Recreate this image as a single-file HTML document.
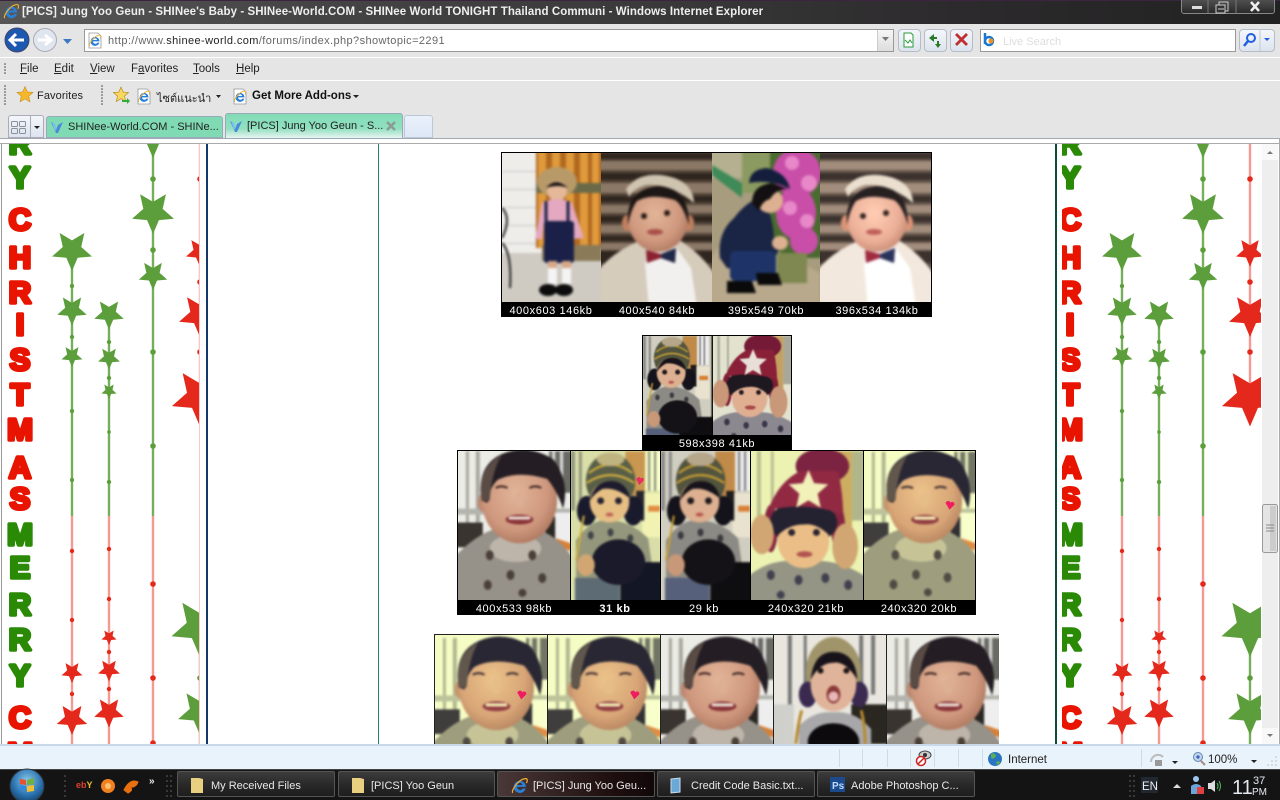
<!DOCTYPE html>
<html><head><meta charset="utf-8"><style>
html,body{margin:0;padding:0;width:1280px;height:800px;overflow:hidden;background:#fff}
body{position:relative;font-family:"Liberation Sans","Noto Sans CJK SC",sans-serif}
.a{position:absolute;white-space:nowrap}
.bar{left:0;width:1280px;background:#e5e5e5}
.m{top:63px;font-size:11.5px;color:#222}
.m u{text-decoration:underline}
.btn{top:29px;width:21px;height:21px;border:1px solid #b4bcc8;border-radius:4px;background:linear-gradient(#f4f7fb,#dde4ee)}
.task{top:771px;height:26px;border:1px solid #555;border-radius:2px;background:linear-gradient(#3c3c3c,#2a2a2a 50%,#1e1e1e);box-sizing:border-box;color:#e8e8e8;font-size:11px;line-height:28px}
</style></head><body>
<div class="a" style="left:0;top:0;width:1280px;height:24px;background:linear-gradient(90deg,#575757 0,#444 25%,#3a3a3a 50%,#2c2a2c 75%,#222 100%);border-top:1px solid #3a2440;box-sizing:border-box"></div>
<div class="a" style="left:22px;top:6px;font-size:11.5px;font-weight:bold;color:#eee;letter-spacing:.07px">[PICS] Jung Yoo Geun - SHINee's Baby - SHINee-World.COM - SHINee World TONIGHT Thailand Communi - Windows Internet Explorer</div>
<div class="a" style="left:1181px;top:-3px;width:94px;height:17px;border:1px solid #888;border-radius:3px;box-sizing:border-box;background:linear-gradient(#555,#2a2a2a)"></div>
<div class="a bar" style="top:24px;height:33px;border-bottom:1px solid #fff;box-sizing:content-box"></div>
<div class="a bar" style="top:58px;height:22px;border-bottom:1px solid #fff"></div>
<div class="a bar" style="top:81px;height:57px"></div>
<div class="a" style="left:0;top:138px;width:1280px;height:1px;background:#a0a8b0"></div>
<div class="a" style="left:0;top:139px;width:1280px;height:5px;background:#fff;border-bottom:1px solid #aaa;box-sizing:border-box"></div>

<div class="a" style="left:84px;top:29px;width:808px;height:21px;background:#fff;border:1px solid #999"></div>
<div class="a" style="left:108px;top:35px;font-size:11px;color:#666;letter-spacing:.4px">http://www.<span style="color:#222">shinee-world.com</span>/forums/index.php?showtopic=2291</div>
<div class="a" style="left:877px;top:30px;width:15px;height:21px;background:linear-gradient(#f6f6f6,#ddd);border-left:1px solid #ccc"></div>
<div class="a btn" style="left:898px"></div><div class="a btn" style="left:924px"></div><div class="a btn" style="left:950px"></div>
<div class="a" style="left:980px;top:29px;width:254px;height:21px;background:#fff;border:1px solid #999"></div>
<div class="a" style="left:1003px;top:36px;font-size:11px;color:#ddd">Live Search</div>
<div class="a btn" style="left:1239px;width:34px"></div>

<div class="a m" style="left:20px"><u>F</u>ile</div>
<div class="a m" style="left:54px"><u>E</u>dit</div>
<div class="a m" style="left:90px"><u>V</u>iew</div>
<div class="a m" style="left:131px">F<u>a</u>vorites</div>
<div class="a m" style="left:193px"><u>T</u>ools</div>
<div class="a m" style="left:236px"><u>H</u>elp</div>
<div class="a" style="left:37px;top:90px;font-size:11px;color:#222;letter-spacing:.1px">Favorites</div>
<div class="a" style="left:157px;top:89px;font-size:11px;color:#222;font-family:'Liberation Sans','DejaVu Sans','Noto Sans CJK SC',sans-serif">ไซต์แนะนำ</div>
<div class="a" style="left:252px;top:90px;font-size:11.5px;font-weight:bold;color:#111">Get More Add-ons</div>

<div class="a" style="left:8px;top:115px;width:36px;height:23px;background:linear-gradient(#f4f6fa,#dde4f0);border:1px solid #aab;box-sizing:border-box;border-radius:3px 3px 0 0"></div>
<div class="a" style="left:46px;top:116px;width:177px;height:22px;background:#80dbb4;border:1px solid #9ab;box-sizing:border-box;border-radius:3px 3px 0 0"></div>
<div class="a" style="left:225px;top:113px;width:178px;height:26px;background:linear-gradient(#82dcb6,#90e0c0 60%,#e8f4f0);border:1px solid #9ab;box-sizing:border-box;border-radius:3px 3px 0 0"></div>
<div class="a" style="left:404px;top:115px;width:29px;height:23px;background:linear-gradient(#eaf1fb,#dde7f6);border:1px solid #bcc8d8;box-sizing:border-box;border-radius:3px 3px 0 0"></div>
<div class="a" style="left:68px;top:121px;font-size:11px;color:#222">SHINee-World.COM - SHINe...</div>
<div class="a" style="left:247px;top:120px;font-size:11px;color:#222">[PICS] Jung Yoo Geun - S...</div>

<svg class="a" style="left:0;top:0" width="1280" height="800" viewBox="0 0 1280 800" xmlns="http://www.w3.org/2000/svg" font-family="Liberation Sans,sans-serif">
<defs>
<filter id="b" x="-5%" y="-5%" width="110%" height="110%" color-interpolation-filters="sRGB"><feGaussianBlur stdDeviation="1.200"/></filter>
<filter id="tb" x="-5%" y="-5%" width="110%" height="110%" color-interpolation-filters="sRGB"><feColorMatrix values="1.02 0 0 0 .02 0 1.04 0 0 .03 0 0 .74 0 .1 0 0 0 1 0"/><feGaussianBlur stdDeviation="1.200"/></filter>
<filter id="lb" x="-5%" y="-5%" width="110%" height="110%" color-interpolation-filters="sRGB"><feColorMatrix values="1.1 0 0 0 .03 0 1.1 0 0 .03 0 0 1.12 0 .04 0 0 0 1 0"/><feGaussianBlur stdDeviation="1.200"/></filter>
<radialGradient id="sk" cx=".45" cy=".42" r=".6"><stop offset="0" stop-color="#e2b498"/><stop offset=".7" stop-color="#cf987e"/><stop offset="1" stop-color="#b07a62"/></radialGradient>
<polygon id="s" points="0,1 -.27,.37 -.951,.309 -.44,-.143 -.588,-.809 0,-.46 .588,-.809 .44,-.143 .951,.309 .27,.37"/>
<g id="ie"><path d="M2.500 9a5.500 5.500 0 0 1 11 0H5.600a2.800 2.800 0 0 0 5.200 1.500h2.500A5.500 5.500 0 0 1 2.500 9zM5.700 7.300h4.700a2.400 2.400 0 0 0-4.700 0z" fill="#2a80d8" fill-rule="evenodd"/><path d="M1.500 14.500C0 12 7 2 13 1.500c2.400-.2 2 2.500 1 4" stroke="#efb030" fill="none" stroke-width="1.100"/></g>
<g id="pg"><path d="M2 1h9l3 3v12H2z" fill="#fff" stroke="#999" stroke-width=".8"/><use href="#ie" transform="translate(1.500 2) scale(.82)"/></g>
<g id="tic"><path d="M2 3l4 2 1 6 2-5 5-3-5 11h-2z" fill="#4a8ad8"/><path d="M3 3l3 2 1 6-1 1z" fill="#7ac0f0"/></g>
<g id="deco">
<g stroke-width="2.400" fill="none">
<path d="M72 260V516M109 320V516M153 144V516" stroke="#76ae5c"/>
<path d="M72 516V744M109 516V744M153 516V744M200 144V400" stroke="#f49a92"/>
<path d="M200 650V744" stroke="#76ae5c"/>
</g>
<g fill="#5c9e3c">
<use href="#s" transform="translate(72 250) scale(21)"/><use href="#s" transform="translate(72 310) scale(15.500)"/><use href="#s" transform="translate(72 356) scale(11)"/>
<use href="#s" transform="translate(109 314) scale(15.500)"/><use href="#s" transform="translate(109 358) scale(11.500)"/><use href="#s" transform="translate(109 391) scale(8)"/>
<use href="#s" transform="translate(153 136) scale(22)"/><use href="#s" transform="translate(153 212) scale(22)"/><use href="#s" transform="translate(153 275) scale(15)"/>
<use href="#s" transform="translate(200 627) scale(30)"/><use href="#s" transform="translate(200 712) scale(23)"/>
<circle cx="72" cy="286" r="2.200"/><circle cx="72" cy="337" r="2.200"/><circle cx="72" cy="411" r="2.200"/><circle cx="72" cy="480" r="2.200"/>
<circle cx="109" cy="342" r="2.200"/><circle cx="109" cy="378" r="2.200"/><circle cx="109" cy="432" r="1.800"/><circle cx="109" cy="482" r="2.200"/>
<circle cx="153" cy="179" r="2.800"/><circle cx="153" cy="250" r="2.800"/><circle cx="153" cy="352" r="2.800"/><circle cx="153" cy="446" r="2.800"/>
<circle cx="200" cy="678" r="2.800"/>
</g>
<g fill="#e4291c">
<use href="#s" transform="translate(72 672) scale(11)"/><use href="#s" transform="translate(72 719) scale(16)"/>
<use href="#s" transform="translate(109 637) scale(8)"/><use href="#s" transform="translate(109 670) scale(11.500)"/><use href="#s" transform="translate(109 712) scale(15.500)"/>
<use href="#s" transform="translate(200 252) scale(14.700)"/><use href="#s" transform="translate(200 315) scale(22)"/><use href="#s" transform="translate(200 397) scale(29.500)"/>
<circle cx="72" cy="551" r="2.200"/><circle cx="72" cy="620" r="2.200"/><circle cx="72" cy="694" r="2.200"/>
<circle cx="109" cy="549" r="2.200"/><circle cx="109" cy="599" r="2.200"/><circle cx="109" cy="652" r="2.200"/><circle cx="109" cy="689" r="2.200"/>
<circle cx="153" cy="584" r="2.800"/><circle cx="153" cy="678" r="2.800"/><circle cx="153" cy="743" r="2.800"/>
<circle cx="200" cy="179" r="2.800"/><circle cx="200" cy="282" r="2.800"/><circle cx="200" cy="352" r="2.800"/>
</g>
</g>
<g id="kc">
<rect x="-5" y="-5" width="130" height="165" fill="#ececE6"/>
<path d="M8 0h3v80H8zM18 0h4v80h-4z" fill="#a8a8a0"/><rect x="92" y="0" width="25" height="42" fill="#6a6a64"/><path d="M95 0h3v42h-3zM103 0h3v42h-3z" fill="#ddd"/>
<rect x="-5" y="58" width="130" height="6" fill="#b4b4ae"/><rect x="-5" y="72" width="30" height="25" fill="#3a3430"/>
<rect x="92" y="62" width="25" height="32" fill="#eee"/><path d="M92 92l25 10v-8l-18-6z" fill="#d88038"/><rect x="88" y="66" width="10" height="30" fill="#2a2622"/>
<path d="M-5 160V108Q20 82 40 78L88 82Q108 92 120 115V160z" fill="#969189"/>
<ellipse cx="58" cy="98" rx="26" ry="14" fill="#bdb5aa"/>
<ellipse cx="25" cy="52" rx="5" ry="9" fill="#c08870"/>
<ellipse cx="62" cy="49" rx="38" ry="44" fill="url(#sk)"/>
<path d="M24 50Q18 15 44 3Q70-8 96 8Q113 30 106 58Q100 40 90 28Q60 19 40 29Q32 36 30 52z" fill="#241e24"/>
<path d="M24 50Q18 18 44 4Q34 20 32 50z" fill="#5a4c44"/>
<path d="M38 37q6-3 12 0M72 37q6-3 12 0" stroke="#3a2420" stroke-width="2" fill="none"/>
<ellipse cx="62" cy="49" rx="5" ry="8" fill="#dcae94"/>
<ellipse cx="62" cy="69" rx="14" ry="5" fill="#8a3438"/><rect x="51" y="66" width="22" height="3" rx="1.500" fill="#eee2d8"/>
<g fill="#4a4038"><ellipse cx="32" cy="105" rx="4" ry="5"/><ellipse cx="75" cy="105" rx="4" ry="5"/><ellipse cx="53" cy="125" rx="4" ry="5"/><ellipse cx="85" cy="128" rx="4" ry="5"/><ellipse cx="30" cy="135" rx="4" ry="5"/><ellipse cx="65" cy="143" rx="4" ry="4"/></g>
</g>
<g id="ka">
<rect x="-5" y="-5" width="100" height="165" fill="#d0cec0"/>
<path d="M0 0h4v60H0zM8 0h3v60H8z" fill="#888"/><rect x="55" y="0" width="20" height="45" fill="#c08a48"/><rect x="75" y="0" width="16" height="40" fill="#eee"/><path d="M78 0h2v40h-2zM84 0h2v40h-2z" fill="#777"/>
<rect x="72" y="42" width="20" height="45" fill="#e8e2ce"/><rect x="78" y="55" width="12" height="6" fill="#d88038"/><rect x="66" y="40" width="8" height="30" fill="#1e1c1c"/>
<ellipse cx="16" cy="60" rx="10" ry="15" fill="#14121a"/><ellipse cx="63" cy="60" rx="10" ry="15" fill="#14121a"/>
<path d="M5 155V90Q20 68 38 70Q60 70 78 88L84 130V155z" fill="#8c8a84"/>
<ellipse cx="40" cy="30" rx="25" ry="28" fill="#52543e"/>
<path d="M18 22Q40 5 62 22M16 32Q40 16 64 32" stroke="#c8a032" stroke-width="2" fill="none"/>
<ellipse cx="40" cy="8" rx="14" ry="7" fill="#b6a68a"/>
<ellipse cx="39" cy="51" rx="20" ry="21" fill="#dcb090"/>
<path d="M19 50Q24 30 40 30Q56 30 60 48Q46 36 32 38Q24 42 19 50z" fill="#17131a"/>
<circle cx="30" cy="50" r="3.500" fill="#221a20"/><circle cx="48" cy="50" r="3.500" fill="#221a20"/><ellipse cx="39" cy="64" rx="4" ry="2" fill="#b85850"/>
<path d="M13 65L5 110" stroke="#c8a032" stroke-width="2" fill="none"/>
<rect x="4" y="128" width="45" height="28" fill="#56607a"/><rect x="50" y="112" width="45" height="45" fill="#0e0e10"/>
<ellipse cx="48" cy="112" rx="27" ry="23" fill="#141216"/>
<ellipse cx="15" cy="115" rx="9" ry="11" fill="#c89878"/><g fill="#3a3a40"><ellipse cx="20" cy="85" rx="3" ry="4"/><ellipse cx="40" cy="82" rx="3" ry="4"/><ellipse cx="60" cy="88" rx="3" ry="4"/></g>
</g>
<g id="kb">
<rect x="-5" y="-5" width="125" height="165" fill="#e2e2ce"/>
<path d="M6 0h4v90H6zM20 0h3v60h-3z" fill="#b0b0a0"/><rect x="82" y="0" width="20" height="80" fill="#c4a060"/><rect x="102" y="0" width="12" height="70" fill="#a8a898"/>
<path d="M-5 155V128Q20 106 53 112Q85 106 118 128V155z" fill="#8c8890"/>
<ellipse cx="20" cy="78" rx="7" ry="24" fill="#7e1c34"/><ellipse cx="88" cy="78" rx="7" ry="24" fill="#7e1c34"/>
<ellipse cx="53" cy="72" rx="34" ry="22" fill="#1e1820"/>
<ellipse cx="53" cy="91" rx="26" ry="27" fill="#e0af92"/>
<path d="M27 85Q34 62 53 62Q72 62 79 85Q66 72 53 74Q38 74 27 85z" fill="#1e1820"/>
<ellipse cx="72" cy="15" rx="27" ry="18" fill="#741a36"/>
<path d="M17 60Q28 30 50 20L88 20Q93 45 93 64Q55 50 17 60z" fill="#8a2038"/>
<use href="#s" transform="translate(58 40) rotate(180) scale(21)" fill="#e8e0d8"/>
<circle cx="41" cy="82" r="3.500" fill="#241a20"/><circle cx="66" cy="82" r="3.500" fill="#241a20"/><ellipse cx="54" cy="104" rx="8" ry="3" fill="#a84848"/>
<ellipse cx="11" cy="84" rx="12" ry="20" fill="#c89878"/><ellipse cx="95" cy="96" rx="13" ry="23" fill="#c89878"/>
<g fill="#3a3648"><ellipse cx="20" cy="125" rx="4" ry="5"/><ellipse cx="48" cy="130" rx="4" ry="5"/><ellipse cx="75" cy="128" rx="4" ry="5"/><ellipse cx="98" cy="135" rx="4" ry="5"/><ellipse cx="30" cy="145" rx="4" ry="4"/></g>
</g>
<g id="p2">
<rect x="-5" y="-5" width="125" height="165" fill="#54463a"/>
<g fill="#8c7866"><rect x="-5" y="8" width="125" height="9"/><rect x="-5" y="30" width="125" height="10"/><rect x="-5" y="52" width="125" height="8"/><rect x="-5" y="72" width="125" height="8"/><rect x="-5" y="90" width="125" height="7"/></g>
<g fill="#30261f"><rect x="-5" y="0" width="125" height="6"/><rect x="-5" y="20" width="125" height="7"/><rect x="-5" y="43" width="125" height="6"/><rect x="-5" y="63" width="125" height="6"/><rect x="-5" y="83" width="125" height="5"/><rect x="-5" y="98" width="125" height="12"/></g>
<path d="M-5 155V120Q10 100 38 88L80 88Q104 104 116 125V155z" fill="#d6ccbc"/>
<path d="M44 110L52 90L72 90L90 115L96 155H48z" fill="#f2f0ee"/>
<ellipse cx="26" cy="70" rx="5" ry="8" fill="#c08060"/><ellipse cx="88" cy="70" rx="5" ry="8" fill="#c08060"/>
<ellipse cx="57" cy="66" rx="30" ry="33" fill="url(#sk)"/>
<path d="M27 72Q24 36 57 33Q88 34 88 72Q82 52 74 47Q50 40 36 48Q30 56 27 72z" fill="#1c1614"/>
<path d="M25 36Q36 20 60 22Q92 26 93 50Q70 30 45 32Q32 36 28 44z" fill="#cfc4b0"/>
<circle cx="43" cy="63" r="3" fill="#2a1c18"/><circle cx="66" cy="60" r="3" fill="#2a1c18"/><ellipse cx="54" cy="79" rx="8" ry="3" fill="#a85048"/>
<path d="M45 97L60 101L75 95L74 110L60 105L46 110z" fill="#8a2030"/><path d="M60 101L75 95L74 110L60 105z" fill="#1e2848"/>
</g>
<g id="lt" font-family="Liberation Sans,sans-serif" font-weight="bold" font-size="31" text-anchor="middle" stroke-width="3.600" stroke-linejoin="round"></g>
</defs>

<!-- decorations -->
<svg x="2" y="144" width="198" height="600" viewBox="2 144 198 600">
<rect x="2" y="144" width="198" height="600" fill="#fff"/>
<use href="#deco"/>
<g font-family="Liberation Sans,sans-serif" font-weight="bold" font-size="31" text-anchor="middle" stroke-width="3.600" stroke-linejoin="round" transform="translate(0 -1)">
<g fill="#2a8a06" stroke="#2a8a06"><text x="20" y="155">R</text><text x="20" y="189">Y</text><text x="20" y="546">M</text><text x="20" y="579">E</text><text x="20" y="616">R</text><text x="20" y="651">R</text><text x="20" y="687">Y</text></g>
<g fill="#e81400" stroke="#e81400"><text x="20" y="231">C</text><text x="20" y="269">H</text><text x="20" y="304">R</text><text x="20" y="336">I</text><text x="20" y="371">S</text><text x="20" y="406">T</text><text x="20" y="441">M</text><text x="20" y="479">A</text><text x="20" y="510">S</text><text x="20" y="729">C</text><text x="20" y="765">M</text></g>
</g>
</svg>
<svg x="1062" y="144" width="199" height="600" viewBox="1062 144 199 600">
<g transform="translate(1050 0)"><use href="#deco"/>
<g font-family="Liberation Sans,sans-serif" font-weight="bold" font-size="31" text-anchor="middle" stroke-width="3.600" stroke-linejoin="round" transform="translate(0 -1)">
<g fill="#2a8a06" stroke="#2a8a06"><text x="20" y="155">R</text><text x="20" y="189">Y</text><text x="20" y="546">M</text><text x="20" y="579">E</text><text x="20" y="616">R</text><text x="20" y="651">R</text><text x="20" y="687">Y</text></g>
<g fill="#e81400" stroke="#e81400"><text x="20" y="231">C</text><text x="20" y="269">H</text><text x="20" y="304">R</text><text x="20" y="336">I</text><text x="20" y="371">S</text><text x="20" y="406">T</text><text x="20" y="441">M</text><text x="20" y="479">A</text><text x="20" y="510">S</text><text x="20" y="729">C</text><text x="20" y="765">M</text></g>
</g></g>
</svg>
<rect x="199" y="144" width="1" height="600" fill="#f8c8c4"/>
<rect x="206" y="144" width="2" height="600" fill="#14386a"/>
<rect x="378" y="144" width="1" height="600" fill="#2a8460"/>
<rect x="1055" y="144" width="2" height="600" fill="#0c4a3c"/>
<rect x="1" y="144" width="1" height="600" fill="#999"/>

<!-- row 1 -->
<rect x="501" y="152" width="431" height="165" fill="#000"/>
<svg x="502" y="153" width="99" height="149" viewBox="0 0 99 149"><g filter="url(#b)">
<rect x="-5" y="-5" width="110" height="160" fill="#efedea"/><g fill="#c8c6c2"><rect y="18" width="34" height="1"/><rect y="36" width="34" height="1"/><rect y="54" width="34" height="1"/><rect y="72" width="34" height="1"/><rect y="90" width="34" height="1"/></g>
<rect x="34" y="-5" width="70" height="100" fill="#b06820"/><g fill="#e09a3c"><rect x="36" y="-5" width="8" height="100"/><rect x="50" y="-5" width="8" height="100"/><rect x="64" y="-5" width="8" height="100"/><rect x="78" y="-5" width="8" height="100"/><rect x="90" y="-5" width="7" height="100"/></g>
<rect x="34" y="30" width="70" height="10" fill="#6a6a48"/><rect x="-5" y="100" width="110" height="55" fill="#cfcbc3"/><rect x="40" y="92" width="60" height="16" fill="#8a7a58"/>
<path d="M0 55q10 10 0 30M0 90q10 10 8 45" stroke="#222" stroke-width="2" fill="none"/>
<ellipse cx="55" cy="29" rx="20" ry="15" fill="#b89a68"/><ellipse cx="55" cy="38" rx="10" ry="10" fill="#e4b898"/><path d="M44 35q10-12 22 0q-10-4-22 0z" fill="#181414"/>
<path d="M33 86L40 50Q55 42 70 50L82 85L72 86L70 70H42L40 86z" fill="#e4a8c0"/><rect x="42" y="68" width="30" height="42" rx="3" fill="#1a2048"/><path d="M44 48v24M66 48v24" stroke="#1a2048" stroke-width="3"/>
<rect x="46" y="108" width="9" height="8" fill="#d8a888"/><rect x="60" y="108" width="9" height="8" fill="#d8a888"/><rect x="46" y="115" width="9" height="16" fill="#f4f4f4"/><rect x="60" y="115" width="9" height="16" fill="#f4f4f4"/><ellipse cx="46" cy="137" rx="9" ry="6" fill="#0c0c0c"/><ellipse cx="62" cy="137" rx="9" ry="6" fill="#0c0c0c"/>
</g></svg>
<svg x="601" y="153" width="111" height="149" viewBox="0 0 111 149"><use href="#p2" filter="url(#b)"/></svg>
<svg x="712" y="153" width="108" height="149" viewBox="0 0 108 149"><g filter="url(#b)">
<rect x="-5" y="-5" width="120" height="160" fill="#a89c7e"/><rect x="-5" y="-5" width="40" height="30" fill="#b4b090"/><path d="M0 12L30 30L30 45L0 22z" fill="#3e8a58"/><rect x="30" y="-5" width="40" height="45" fill="#8a9a60"/>
<rect x="58" y="-5" width="55" height="110" fill="#4a6a30"/>
<g fill="#c84ea8"><ellipse cx="85" cy="20" rx="24" ry="24"/><ellipse cx="84" cy="60" rx="20" ry="26"/><ellipse cx="92" cy="88" rx="14" ry="14"/></g><g fill="#e888c8"><circle cx="80" cy="10" r="7"/><circle cx="97" cy="30" r="8"/><circle cx="78" cy="55" r="7"/><circle cx="95" cy="68" r="7"/></g>
<path d="M-5 110L10 90L60 95L108 120V155H-5z" fill="#b8a88c"/><rect x="65" y="100" width="30" height="30" fill="#7e8850"/>
<path d="M8 105Q5 80 22 65Q35 48 48 45Q60 55 62 85L68 95L60 110L38 118L15 115z" fill="#1a2444"/>
<rect x="18" y="98" width="46" height="30" rx="5" fill="#1e3468"/><path d="M15 128h25l4 12H15z" fill="#0a0a0a"/><path d="M44 120h22l4 12H46z" fill="#0a0a0a"/>
<ellipse cx="58" cy="48" rx="13" ry="12" fill="#dcb090"/><path d="M40 50Q40 32 60 30L76 36Q64 36 58 46Q50 48 47 58z" fill="#141012"/><path d="M37 30Q38 16 55 15Q75 20 78 36Q60 26 37 30z" fill="#141e3c"/><ellipse cx="68" cy="90" rx="8" ry="7" fill="#dcb090"/>
</g></svg>
<svg x="820" y="153" width="111" height="149" viewBox="0 0 111 149"><use href="#p2" filter="url(#lb)"/></svg>
<g fill="#fff" font-size="11" text-anchor="middle" letter-spacing=".6">
<text x="551" y="314">400x603 146kb</text><text x="657" y="314">400x540 84kb</text><text x="766" y="314">395x549 70kb</text><text x="877" y="314">396x534 134kb</text>
</g>

<!-- row 2 -->
<rect x="642" y="335" width="150" height="116" fill="#000"/>
<svg x="643" y="336" width="70" height="99" viewBox="0 0 97 137"><use href="#ka" filter="url(#b)"/></svg>
<svg x="713" y="336" width="78" height="99" viewBox="0 0 113 144"><use href="#kb" filter="url(#b)"/></svg>
<text x="717" y="447" fill="#fff" font-size="11" text-anchor="middle" letter-spacing=".6">598x398 41kb</text>

<!-- row 3 -->
<rect x="457" y="450" width="519" height="165" fill="#000"/>
<svg x="458" y="451" width="112" height="149" viewBox="0 0 113 150"><use href="#kc" filter="url(#b)"/></svg>
<svg x="571" y="451" width="89" height="149" viewBox="0 0 90 150"><use href="#ka" filter="url(#tb)"/><path d="M66 28c2-3 5-2 4 0c2-3 5 0 3 2l-4 4z" fill="#e83060"/></svg>
<svg x="661" y="451" width="89" height="149" viewBox="0 0 90 150"><use href="#ka" filter="url(#b)"/></svg>
<svg x="751" y="451" width="112" height="149" viewBox="0 0 113 150"><use href="#kb" filter="url(#tb)"/></svg>
<svg x="864" y="451" width="111" height="149" viewBox="0 0 113 150"><use href="#kc" filter="url(#tb)"/><path d="M83 52c2-3 5-2 5 0c1-2 5-1 4 2l-5 5z" fill="#f01c60"/></svg>
<g fill="#fff" font-size="11" text-anchor="middle" letter-spacing=".6">
<text x="514" y="612">400x533 98kb</text><text x="615" y="612" font-weight="bold">31 kb</text><text x="704" y="612">29 kb</text><text x="806" y="612">240x320 21kb</text><text x="919" y="612">240x320 20kb</text>
</g>

<!-- row 4 -->
<rect x="434" y="634" width="565" height="110" fill="#222"/>
<svg x="435" y="635" width="112" height="109" viewBox="0 0 113 110"><use href="#kc" filter="url(#tb)" transform="translate(0 3)"/><path d="M83 58c2-3 5-2 5 0c1-2 5-1 4 2l-5 5z" fill="#f01c60"/></svg>
<svg x="548" y="635" width="112" height="109" viewBox="0 0 113 110"><use href="#kc" filter="url(#tb)" transform="translate(0 3)"/><path d="M83 58c2-3 5-2 5 0c1-2 5-1 4 2l-5 5z" fill="#f01c60"/></svg>
<svg x="661" y="635" width="112" height="109" viewBox="0 0 113 110"><use href="#kc" filter="url(#b)" transform="translate(0 3)"/></svg>
<svg x="774" y="635" width="112" height="109" viewBox="0 0 113 110"><g filter="url(#b)">
<rect x="-5" y="-5" width="125" height="125" fill="#e8e6de"/><path d="M14 0h4v75h-4zM30 0h3v60h-3zM86 0h4v60h-4zM98 0h4v60h-4z" fill="#777"/><rect x="-5" y="70" width="25" height="45" fill="#cfd0cc"/><rect x="78" y="70" width="40" height="40" fill="#2a2620"/>
<ellipse cx="60" cy="38" rx="28" ry="36" fill="#a0946a"/><ellipse cx="34" cy="60" rx="9" ry="13" fill="#3a2a50"/><ellipse cx="86" cy="60" rx="9" ry="13" fill="#3a2a50"/>
<path d="M25 115V92Q40 76 60 78Q82 76 98 95V115z" fill="#a8a8aa"/><path d="M22 110Q24 90 28 76M92 110Q92 92 88 76" stroke="#b88a30" stroke-width="3" fill="none"/>
<ellipse cx="60" cy="50" rx="23" ry="27" fill="#e0b49a"/><path d="M37 45Q40 17 60 17Q82 17 84 45Q72 26 60 28Q46 28 37 45z" fill="#18131a"/>
<circle cx="47" cy="36" r="3" fill="#1c1416"/><circle cx="73" cy="36" r="3" fill="#1c1416"/><ellipse cx="60" cy="60" rx="7" ry="9" fill="#8a3838"/><ellipse cx="60" cy="62" rx="5" ry="5" fill="#e8b8b8"/>
<ellipse cx="60" cy="108" rx="26" ry="19" fill="#0c0a0c"/>
</g></svg>
<svg x="887" y="635" width="112" height="109" viewBox="0 0 113 110"><use href="#kc" filter="url(#b)" transform="translate(0 3)"/></svg>

<!-- scrollbar -->
<rect x="1262" y="144" width="16" height="600" fill="#eee"/><rect x="1262" y="144" width="16" height="16" fill="#f8f8f8"/><rect x="1262" y="728" width="16" height="16" fill="#f8f8f8"/>
<path d="M1267 154l3-3 3 3z" fill="#777"/><path d="M1267 734l3 3 3-3z" fill="#777"/>
<rect x="1262.500" y="504.500" width="15" height="48" rx="2" fill="#e4e4e4" stroke="#999"/><rect x="1270" y="506" width="6" height="45" fill="#ccc"/><path d="M1266 525h8M1266 528h8M1266 531h8" stroke="#888"/>
<rect x="1278" y="144" width="1" height="600" fill="#fff"/><rect x="1279" y="139" width="1" height="605" fill="#aaa"/>

<!-- window buttons -->
<path d="M1208 0v14M1236 0v14" stroke="#777"/><rect x="1192" y="6" width="10" height="3" fill="#ddd"/>
<path d="M1219 2h9v9h-9z" fill="none" stroke="#ccc"/><path d="M1216 5h9v8h-9z" fill="#333" stroke="#ccc"/><path d="M1218 9h6" stroke="#ccc"/>
<path d="M1251 2l8 9M1259 2l-8 9" stroke="#eee" stroke-width="2.500"/>

<!-- nav -->
<use href="#ie" transform="translate(3 3) scale(1.050)"/>
<circle cx="45" cy="40" r="11.500" fill="#dfe6ee" stroke="#aab"/><path d="M38 40h12M45 35l6 5-6 5" fill="none" stroke="#fff" stroke-width="3"/>
<circle cx="17" cy="40" r="12" fill="#1c58b0" stroke="#446"/><path d="M11 40h13M16 34l-6 6 6 6" fill="none" stroke="#fff" stroke-width="3"/>
<path d="M63 39h9l-4.500 5z" fill="#3a78c0"/>
<use href="#pg" transform="translate(87 32)"/>
<path d="M882 37h7l-3.500 4z" fill="#777"/>
<path d="M904 33h7l2 2v12h-9z" fill="#fff" stroke="#2a9a3a"/><path d="M905 40l3 3 2-3 2 3" stroke="#2a9a3a" fill="none"/>
<path d="M929 38l5-4v3h3v2h-3v3zM941 44l-3 4-3-4h2v-3h2v3z" fill="#2a7a2a"/>
<path d="M956 34l11 11M967 34l-11 11" stroke="#c03030" stroke-width="2.800"/>
<path d="M985 33v11M985 41a4 4 0 1 0 8 0a4 4 0 1 0-8 0" fill="none" stroke="#1a78d0" stroke-width="2.500"/><circle cx="991" cy="41" r="2.500" fill="#f09020"/>
<circle cx="1251" cy="38" r="4" fill="none" stroke="#2060e0" stroke-width="2"/><path d="M1248 41l-4 5" stroke="#2060e0" stroke-width="2.500"/><path d="M1260 29v22" stroke="#c0c8d4"/><path d="M1264 38h6l-3 3z" fill="#2060e0"/>

<!-- grips -->
<g fill="#444"><circle cx="5" cy="64" r=".8"/><circle cx="5" cy="67" r=".8"/><circle cx="5" cy="70" r=".8"/><circle cx="5" cy="73" r=".8"/>
<circle cx="5" cy="86" r=".8"/><circle cx="5" cy="89" r=".8"/><circle cx="5" cy="92" r=".8"/><circle cx="5" cy="95" r=".8"/><circle cx="5" cy="98" r=".8"/><circle cx="5" cy="101" r=".8"/><circle cx="5" cy="104" r=".8"/>
<circle cx="102" cy="86" r=".8"/><circle cx="102" cy="89" r=".8"/><circle cx="102" cy="92" r=".8"/><circle cx="102" cy="95" r=".8"/><circle cx="102" cy="98" r=".8"/><circle cx="102" cy="101" r=".8"/><circle cx="102" cy="104" r=".8"/></g>
<use href="#s" transform="translate(25 95) rotate(180) scale(8.500)" fill="#f4b828" stroke="#c08820" stroke-width=".06"/>
<use href="#s" transform="translate(121 95) rotate(180) scale(8)" fill="#f8d860" stroke="#b08820" stroke-width=".08"/><path d="M122 100h5v-2l3 3-3 3v-2h-5z" fill="#3aa838"/>
<use href="#pg" transform="translate(136 88)"/>
<use href="#pg" transform="translate(232 88)"/>
<path d="M216 95h5l-2.500 3zM353 95h6l-3 3z" fill="#222"/>

<!-- tabs icons -->
<g fill="none" stroke="#8a909a"><rect x="11.500" y="121.500" width="6" height="5" rx="1"/><rect x="19.500" y="121.500" width="6" height="5" rx="1"/><rect x="11.500" y="128.500" width="6" height="5" rx="1"/><rect x="19.500" y="128.500" width="6" height="5" rx="1"/></g>
<path d="M30.500 115v23" stroke="#aab"/><path d="M34 126h6l-3 3z" fill="#222"/>
<use href="#tic" transform="translate(49 119)"/><use href="#tic" transform="translate(228 118)"/>
<path d="M387 122l8 8M395 122l-8 8" stroke="#8a9a94" stroke-width="2.500"/>

<!-- status bar -->
<rect x="0" y="744" width="1280" height="2" fill="#c8d8e8"/><rect x="0" y="746" width="1280" height="23" fill="#e9f3fb"/>
<g stroke="#cfdae4"><path d="M839.500 749v18M862.500 749v18M887.500 749v18M910.500 749v18M934.500 749v18M958.500 749v18M982.500 749v18M1141.500 749v18"/></g>
<ellipse cx="925" cy="755" rx="6" ry="4" fill="#ccc" stroke="#444"/><circle cx="925" cy="755" r="2" fill="#333"/><circle cx="921" cy="761" r="4.500" fill="#fff" stroke="#d02020" stroke-width="1.500"/><path d="M918 764l6-6" stroke="#d02020" stroke-width="1.500"/>
<circle cx="995" cy="759" r="7" fill="#2a74c4"/><path d="M991 754q4-2 5 2q-2 4-5 2zM996 762q4-2 4 1l-3 2z" fill="#5ab050"/>
<text x="1008" y="763" font-size="11.500" fill="#222">Internet</text>
<path d="M1151 762a7 7 0 0 1 12-5" stroke="#bbb" stroke-width="2" fill="none"/><rect x="1155" y="760" width="7" height="6" fill="#999"/><path d="M1172 761h6l-3 3z" fill="#222"/>
<circle cx="1198" cy="757" r="4.500" fill="#bcd4f0" stroke="#6688aa"/><path d="M1201 761l4 4" stroke="#a88" stroke-width="2"/><path d="M1196 757h4M1198 755v4" stroke="#24a"/>
<text x="1208" y="763" font-size="11.500" fill="#222">100%</text><path d="M1251 760h6l-3 3z" fill="#222"/>
<g fill="#bbb"><circle cx="1276" cy="765" r=".8"/><circle cx="1272" cy="765" r=".8"/><circle cx="1268" cy="765" r=".8"/><circle cx="1276" cy="761" r=".8"/><circle cx="1272" cy="761" r=".8"/><circle cx="1276" cy="757" r=".8"/></g>

<!-- taskbar -->
<rect x="0" y="769" width="1280" height="31" fill="#141414"/><rect x="0" y="769" width="1280" height="1" fill="#444"/>
</svg>

<div class="a task" style="left:177px;width:158px;padding-left:33px">My Received Files</div>
<div class="a task" style="left:338px;width:157px;padding-left:32px">[PICS] Yoo Geun</div>
<div class="a task" style="left:497px;width:158px;padding-left:35px;background:linear-gradient(90deg,#4a3838,#201010 70%,#120808)">[PICS] Jung Yoo Geu...</div>
<div class="a task" style="left:657px;width:158px;padding-left:33px">Credit Code Basic.txt...</div>
<div class="a task" style="left:817px;width:158px;padding-left:33px">Adobe Photoshop C...</div>

<svg class="a" style="left:0;top:0" width="1280" height="800" viewBox="0 0 1280 800" xmlns="http://www.w3.org/2000/svg">
<defs><radialGradient id="o" cx=".5" cy=".35" r=".7"><stop offset="0" stop-color="#8ac8e8"/><stop offset=".6" stop-color="#2a72b0"/><stop offset="1" stop-color="#123a60"/></radialGradient></defs>
<circle cx="27" cy="786" r="17" fill="url(#o)" stroke="#333"/>
<path d="M20 779l6 1v5l-6-1z" fill="#e85030"/><path d="M27 780l7-2v6l-7 1z" fill="#70b040"/><path d="M20 785l6 1v5l-6-1z" fill="#3088e0"/><path d="M27 786l7-1v6l-7 1z" fill="#f0c030"/>
<text x="76" y="788" font-size="9" font-weight="bold" fill="#e04030" font-family="Liberation Sans,sans-serif">eb<tspan fill="#e8c030">Y</tspan></text>
<circle cx="108" cy="786" r="7" fill="#f08020"/><circle cx="108" cy="786" r="3" fill="#fbc070"/>
<path d="M124 790q6-12 14-8q-2 6-8 5q4 3-2 6z" fill="#e87010" stroke="#e87010"/>
<text x="149" y="784" font-size="10" font-weight="bold" fill="#eee" font-family="Liberation Sans,sans-serif">»</text>
<g fill="#555"><circle cx="65" cy="776" r=".9"/><circle cx="65" cy="781" r=".9"/><circle cx="65" cy="786" r=".9"/><circle cx="65" cy="791" r=".9"/><circle cx="65" cy="796" r=".9"/><circle cx="167" cy="776" r=".9"/><circle cx="167" cy="781" r=".9"/><circle cx="167" cy="786" r=".9"/><circle cx="167" cy="791" r=".9"/><circle cx="167" cy="796" r=".9"/><circle cx="171" cy="776" r=".9"/><circle cx="171" cy="781" r=".9"/><circle cx="171" cy="786" r=".9"/><circle cx="171" cy="791" r=".9"/><circle cx="171" cy="796" r=".9"/><circle cx="1130" cy="776" r=".9"/><circle cx="1130" cy="781" r=".9"/><circle cx="1130" cy="786" r=".9"/><circle cx="1130" cy="791" r=".9"/><circle cx="1130" cy="796" r=".9"/><circle cx="1134" cy="776" r=".9"/><circle cx="1134" cy="781" r=".9"/><circle cx="1134" cy="786" r=".9"/><circle cx="1134" cy="791" r=".9"/><circle cx="1134" cy="796" r=".9"/></g>
<path d="M191 778h8l4 1v14h-12z" fill="#e8d080"/><path d="M352 778h8l4 1v14h-12z" fill="#e8d080"/>
<use href="#ie" transform="translate(511 777) scale(1.100)"/>
<path d="M671 779l9-1v14l-9 1z" fill="#6aa8d8" stroke="#cde"/>
<rect x="830" y="777" width="15" height="15" fill="#1c4a8c"/><text x="832" y="789" font-size="10" font-weight="bold" fill="#bcdcff" font-family="Liberation Sans,sans-serif">Ps</text>
<rect x="1141" y="777" width="17" height="16" fill="#222830"/><text x="1142" y="790" font-size="11.500" fill="#eee" font-family="Liberation Sans,sans-serif">EN</text>
<path d="M1173 788l4-4 4 4z" fill="#ddd"/>
<circle cx="1196" cy="779" r="3" fill="#9cc8f0"/><path d="M1191 794v-8q5-4 10 0v8z" fill="#6aa4d8"/><rect x="1197" y="787" width="7" height="7" fill="#e04040"/>
<path d="M1208 783h3l4-3v12l-4-3h-3z" fill="#ddd"/><path d="M1217 783q2 3 0 6M1219 781q3 5 0 10" stroke="#4ac060" fill="none"/>
<text x="1232" y="794" font-size="20" fill="#e4e8ee" font-family="Liberation Sans,sans-serif">11</text>
<text x="1253" y="784" font-size="11" fill="#e4e8ee" font-family="Liberation Sans,sans-serif">37</text>
<text x="1252" y="795" font-size="10" fill="#e4e8ee" font-family="Liberation Sans,sans-serif">PM</text>
</svg>
</body></html>
